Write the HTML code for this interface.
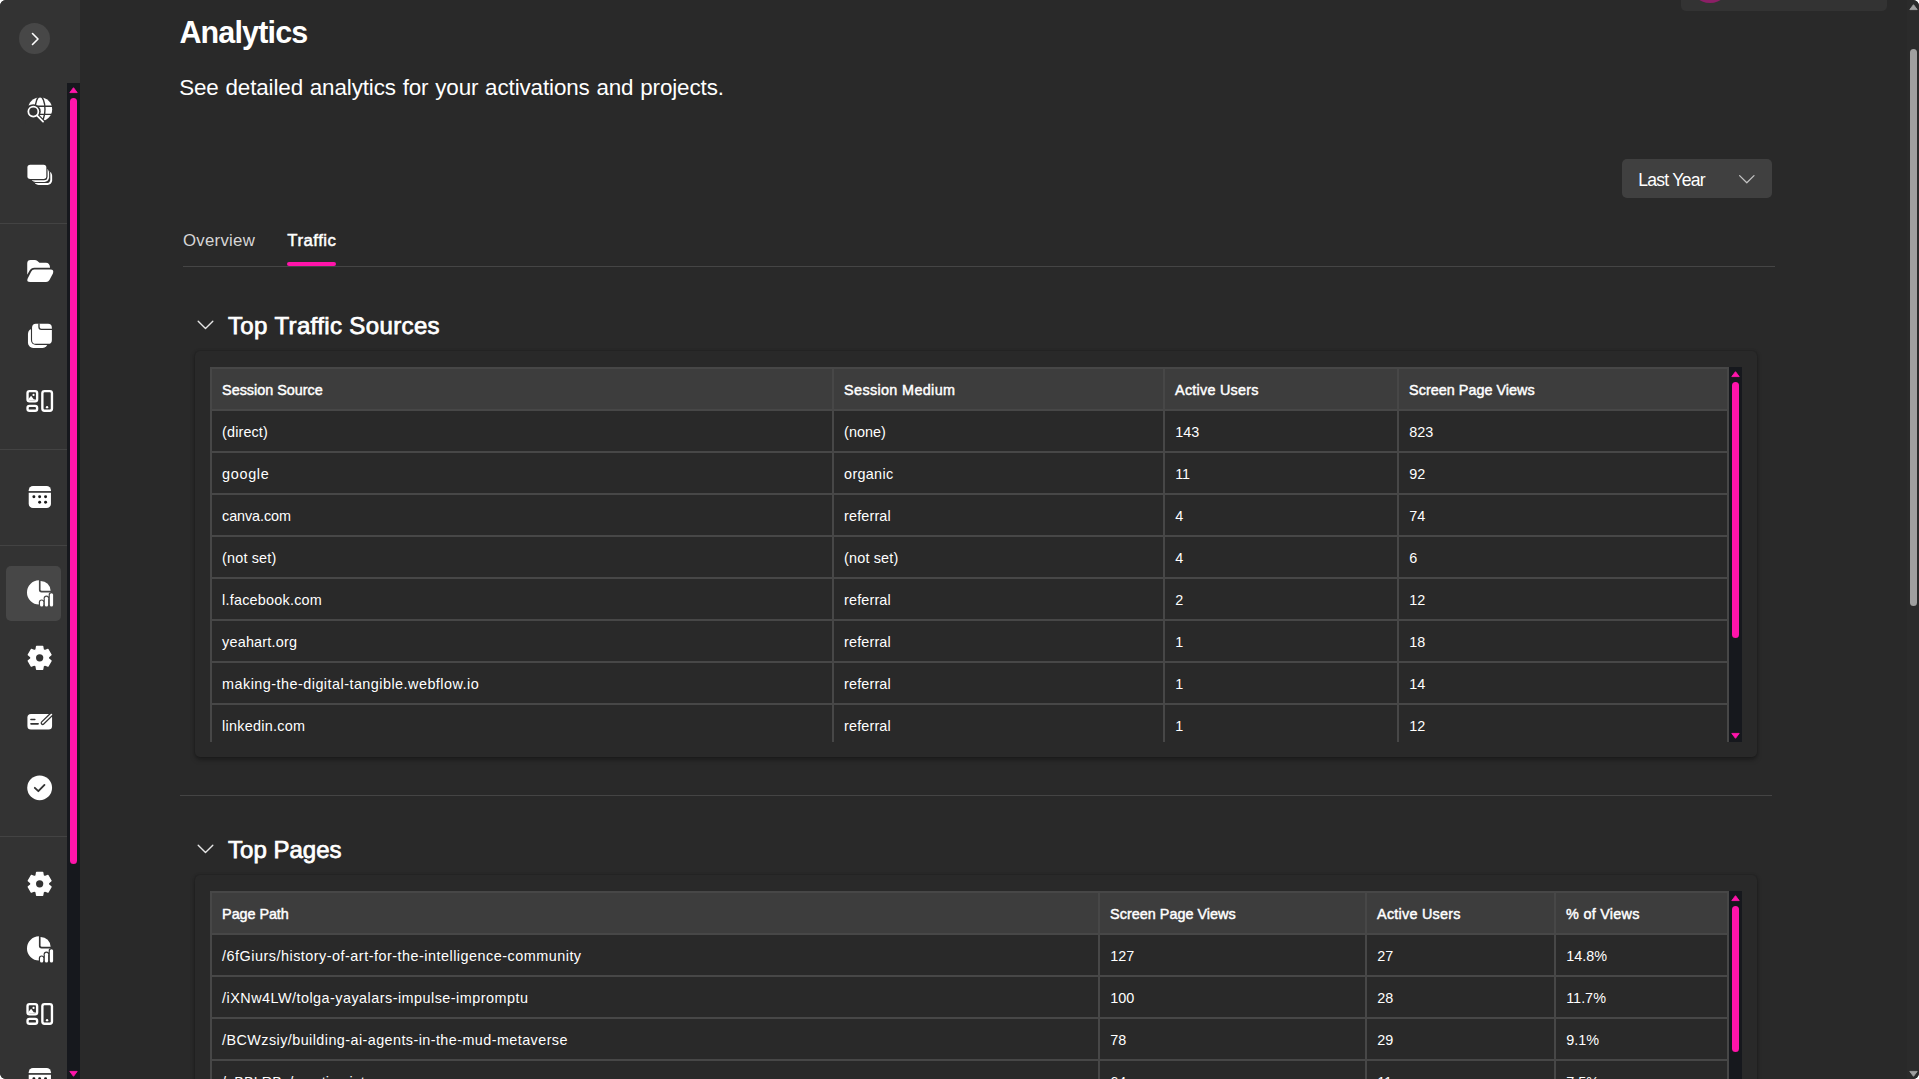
<!DOCTYPE html>
<html lang="en">
<head>
<meta charset="utf-8">
<title>Analytics</title>
<style>
*{box-sizing:border-box;margin:0;padding:0}
button{border:0;background:none;color:inherit;font:inherit;cursor:pointer;text-align:left}
a{color:inherit;text-decoration:none}
html,body{width:1919px;height:1079px;overflow:hidden;background:#fff}
body{font-family:"Liberation Sans",sans-serif;color:#fff}
#app{position:absolute;left:0;top:0;width:1919px;height:1079px;background:#292929;border-radius:6px;overflow:hidden}
#side{position:absolute;left:0;top:0;width:80px;height:1079px;background:#333}
#toggle{position:absolute;left:19px;top:23px;width:31px;height:31px;border-radius:50%;background:#474747}
#toggle svg{position:absolute;left:9.5px;top:8.5px}
.sdiv{position:absolute;left:0;width:67px;height:1px;background:#434343}
.track{position:absolute;width:13px;background:#16181d}
.track i{position:absolute;left:3px;width:7px;border-radius:3.5px;background:#ff14aa}
.track svg{position:absolute;left:0;fill:#ff14aa;stroke:#ff14aa;stroke-width:.9;stroke-linejoin:round}
#strack{left:67px;top:83px;height:996px}
.ic{position:absolute;display:block;width:40px;height:40px}.ic svg{display:block}
#sel{position:absolute;left:6px;top:566px;width:55px;height:55px;border-radius:5px;background:#474747}
.t,h1,h2,p.t{position:absolute;white-space:nowrap;line-height:1;font-weight:400}
main h1,main h2,main p,main .t{position:absolute;white-space:nowrap;line-height:1}
#user{position:absolute;left:1681px;top:-30px;width:206px;height:40.8px;border-radius:5px;background:#333}
#user i{position:absolute;left:9px;top:-7px;width:40px;height:40px;border-radius:50%;background:#8c1f66}
#range{position:absolute;left:1622px;top:159px;width:150px;height:39px;border-radius:5px;background:#404040}
#range svg{position:absolute;left:116px;top:15px}
#tabline{position:absolute;left:183px;top:266px;width:1592px;height:1px;background:#454545}
#tabsel{position:absolute;left:287px;top:262px;width:49px;height:4px;border-radius:2px;background:#ff14aa}
.chev{position:absolute;left:197px}
.card{position:absolute;left:195px;width:1562px;border-radius:5px;background:#292929;box-shadow:0 0 2.5px rgba(0,0,0,.26),0 2.5px 5px rgba(0,0,0,.3)}
.scroll{position:absolute;left:15px;top:16px;width:1532px;overflow:hidden}
.scroll .track{left:1519px;top:0}
table.grid{border-collapse:separate;border-spacing:0;table-layout:fixed;width:1519px;border-left:2px solid #474747;border-top:2px solid #474747;font-size:14.4px}
.grid th,.grid td{height:42px;padding:1.6px 0 0 10.1px;line-height:38.4px;border-right:2px solid #474747;border-bottom:2px solid #474747;text-align:left;white-space:nowrap;overflow:hidden;font-weight:400}
.grid th{background:#3d3d3d;-webkit-text-stroke:.45px #fff}
.grid td.n{padding-left:10.2px}
.hr{position:absolute;left:180px;top:795px;width:1592px;height:1px;border:0;background:#444}
#ptrack{position:absolute;left:1907px;top:0;width:12px;height:1079px;background:#2b2b2b}
#ptrack i{position:absolute;left:3px;top:49px;width:7px;height:557px;border-radius:3.5px;background:#a0a0a0}
#ptrack svg{position:absolute;left:0;fill:#a0a0a0;stroke:#a0a0a0;stroke-width:.9;stroke-linejoin:round}
</style>
</head>
<body>
<div id="app">
<nav id="side">
<button id="toggle" type="button" aria-label="Expand navigation"><svg width="12" height="14" viewBox="0 0 12 14" fill="none" stroke="#fff" stroke-width="1.6" stroke-linecap="round" stroke-linejoin="round"><path d="M3.5 1.5 L9 7 L3.5 12.5"/></svg></button>
<div class="sdiv" style="top:223px"></div><div class="sdiv" style="top:449px"></div><div class="sdiv" style="top:545px"></div><div class="sdiv" style="top:836px"></div>
<div id="sel"></div>
<a class="ic" href="#" style="left:20px;top:90px" title="Explore"><svg width="40" height="40" viewBox="0 0 1079 1079" role="img" aria-label="Explore"><circle cx="542" cy="520" r="325" fill="#fff"/><g fill="none" stroke="#333" stroke-width="38"><ellipse cx="542" cy="520" rx="132" ry="345"/><path d="M180 437H900M180 657H900"/></g><path d="M150 690H470L650 870L560 920H150Z" fill="#333"/><circle cx="360" cy="582" r="200" fill="#333"/><path d="M470 700L640 870" stroke="#333" stroke-width="110" stroke-linecap="round"/><circle cx="360" cy="582" r="135" fill="none" stroke="#fff" stroke-width="48"/><path d="M462 688L622 852" stroke="#fff" stroke-width="48" stroke-linecap="round"/></svg></a>
<a class="ic" href="#" style="left:20px;top:155px" title="Collections"><svg width="40" height="40" viewBox="0 0 1079 1079" role="img" aria-label="Collections"><rect x="375" y="437" width="492" height="370" rx="125" fill="#fff"/><rect x="345" y="407" width="472" height="350" rx="105" fill="#333"/><rect x="290" y="352" width="495" height="373" rx="125" fill="#fff"/><rect x="260" y="322" width="475" height="353" rx="105" fill="#333"/><rect x="170" y="235" width="570" height="445" rx="95" fill="#333"/><rect x="200" y="265" width="510" height="382" rx="75" fill="#fff"/></svg></a>
<a class="ic" href="#" style="left:20px;top:251px" title="Projects"><svg width="40" height="40" viewBox="0 0 1079 1079" role="img" aria-label="Projects"><path fill="#fff" d="M195 640V330Q195 240 285 240H395Q440 240 470 270L525 320H700Q800 320 812 455H390Q300 455 255 535Z"/><path fill="#fff" d="M385 500H825Q925 500 888 610L795 785Q765 835 705 835H275Q165 835 208 740L300 560Q330 500 385 500Z"/></svg></a>
<a class="ic" href="#" style="left:20px;top:316px" title="Library"><svg width="40" height="40" viewBox="0 0 1079 1079" role="img" aria-label="Library"><rect x="215" y="340" width="535" height="520" rx="140" fill="#fff"/><rect x="295" y="175" width="600" height="605" rx="135" fill="#333"/><rect x="325" y="210" width="535" height="540" rx="105" fill="#fff"/><path d="M512 200V300Q512 362 575 362H870" fill="none" stroke="#333" stroke-width="36"/></svg></a>
<a class="ic" href="#" style="left:20px;top:381px" title="Layouts"><svg width="40" height="40" viewBox="0 0 1079 1079" role="img" aria-label="Layouts"><g fill="none" stroke="#fff" stroke-width="64"><rect x="203" y="272" width="259" height="276" rx="55"/><rect x="203" y="672" width="259" height="131" rx="55"/><rect x="603" y="272" width="259" height="531" rx="58"/></g><circle cx="365" cy="375" r="30" fill="#fff"/><circle cx="730" cy="705" r="32" fill="#fff"/><path fill="#fff" d="M225 520V485L300 400L370 495L440 505V520Z"/></svg></a>
<a class="ic" href="#" style="left:20px;top:477px" title="Calendar"><svg width="40" height="40" viewBox="0 0 1079 1079" role="img" aria-label="Calendar"><rect x="235" y="240" width="600" height="595" rx="115" fill="#fff"/><rect x="200" y="380" width="680" height="45" fill="#333"/><circle cx="375" cy="532" r="40" fill="#1a1a1a"/><circle cx="530" cy="532" r="40" fill="#1a1a1a"/><circle cx="690" cy="532" r="40" fill="#1a1a1a"/><circle cx="530" cy="683" r="40" fill="#1a1a1a"/><circle cx="690" cy="683" r="40" fill="#1a1a1a"/></svg></a>
<a class="ic" href="#" style="left:20px;top:573px" title="Analytics"><svg width="40" height="40" viewBox="0 0 1079 1079" role="img" aria-label="Analytics"><path fill="#fff" d="M510 198A325 325 0 1 0 838 525H580Q510 525 510 455Z"/><path fill="#fff" d="M555 213A268 268 0 0 1 826 480H590Q555 480 555 445Z"/><rect x="508" y="713" width="152" height="224" rx="76" fill="#474747"/><rect x="638" y="608" width="152" height="329" rx="76" fill="#474747"/><rect x="773" y="513" width="152" height="424" rx="76" fill="#474747"/><rect x="540" y="745" width="88" height="160" rx="44" fill="#fff"/><rect x="670" y="640" width="88" height="265" rx="44" fill="#fff"/><rect x="805" y="545" width="88" height="360" rx="44" fill="#fff"/></svg></a>
<a class="ic" href="#" style="left:20px;top:638px" title="Settings"><svg width="40" height="40" viewBox="0 0 1079 1079" role="img" aria-label="Settings"><path d="M433 318L448 228L612 228L627 318L670 342L755 310L837 453L767 510L767 560L837 617L755 760L670 728L627 752L612 842L448 842L433 752L390 728L305 760L223 617L293 560L293 510L223 453L305 310L390 342Z" fill="#fff" stroke="#fff" stroke-width="36" stroke-linejoin="round"/><circle cx="530" cy="535" r="98" fill="#333"/></svg></a>
<a class="ic" href="#" style="left:20px;top:702px" title="Signatures"><svg width="40" height="40" viewBox="0 0 1079 1079" role="img" aria-label="Signatures"><rect x="200" y="325" width="665" height="415" rx="95" fill="#fff"/><path d="M295 470H400M295 590H490" stroke="#333" stroke-width="42" stroke-linecap="round"/><path d="M612 565L880 305" stroke="#333" stroke-width="112" stroke-linecap="round"/><path d="M612 565L848 338" stroke="#fff" stroke-width="44" stroke-linecap="round"/></svg></a>
<a class="ic" href="#" style="left:20px;top:768px" title="Approvals"><svg width="40" height="40" viewBox="0 0 1079 1079" role="img" aria-label="Approvals"><circle cx="530" cy="535" r="335" fill="#fff"/><path d="M400 535L495 625L660 455" fill="none" stroke="#333" stroke-width="50" stroke-linecap="round" stroke-linejoin="round"/></svg></a>
<a class="ic" href="#" style="left:20px;top:864px" title="Admin settings"><svg width="40" height="40" viewBox="0 0 1079 1079" role="img" aria-label="Admin settings"><path d="M433 318L448 228L612 228L627 318L670 342L755 310L837 453L767 510L767 560L837 617L755 760L670 728L627 752L612 842L448 842L433 752L390 728L305 760L223 617L293 560L293 510L223 453L305 310L390 342Z" fill="#fff" stroke="#fff" stroke-width="36" stroke-linejoin="round"/><circle cx="530" cy="535" r="98" fill="#333"/></svg></a>
<a class="ic" href="#" style="left:20px;top:929px" title="Admin analytics"><svg width="40" height="40" viewBox="0 0 1079 1079" role="img" aria-label="Admin analytics"><path fill="#fff" d="M510 198A325 325 0 1 0 838 525H580Q510 525 510 455Z"/><path fill="#fff" d="M555 213A268 268 0 0 1 826 480H590Q555 480 555 445Z"/><rect x="508" y="713" width="152" height="224" rx="76" fill="#333"/><rect x="638" y="608" width="152" height="329" rx="76" fill="#333"/><rect x="773" y="513" width="152" height="424" rx="76" fill="#333"/><rect x="540" y="745" width="88" height="160" rx="44" fill="#fff"/><rect x="670" y="640" width="88" height="265" rx="44" fill="#fff"/><rect x="805" y="545" width="88" height="360" rx="44" fill="#fff"/></svg></a>
<a class="ic" href="#" style="left:20px;top:994px" title="Admin layouts"><svg width="40" height="40" viewBox="0 0 1079 1079" role="img" aria-label="Admin layouts"><g fill="none" stroke="#fff" stroke-width="64"><rect x="203" y="272" width="259" height="276" rx="55"/><rect x="203" y="672" width="259" height="131" rx="55"/><rect x="603" y="272" width="259" height="531" rx="58"/></g><circle cx="365" cy="375" r="30" fill="#fff"/><circle cx="730" cy="705" r="32" fill="#fff"/><path fill="#fff" d="M225 520V485L300 400L370 495L440 505V520Z"/></svg></a>
<a class="ic" href="#" style="left:20px;top:1059px" title="Admin calendar"><svg width="40" height="40" viewBox="0 0 1079 1079" role="img" aria-label="Admin calendar"><rect x="235" y="240" width="600" height="595" rx="115" fill="#fff"/><rect x="200" y="380" width="680" height="45" fill="#333"/><circle cx="375" cy="532" r="40" fill="#1a1a1a"/><circle cx="530" cy="532" r="40" fill="#1a1a1a"/><circle cx="690" cy="532" r="40" fill="#1a1a1a"/><circle cx="530" cy="683" r="40" fill="#1a1a1a"/><circle cx="690" cy="683" r="40" fill="#1a1a1a"/></svg></a>
<div class="track" id="strack"><svg width="13" height="8" style="top:3px" viewBox="0 0 13 8"><path d="M6.5 1.7 L10.2 6.6 H2.8 Z"/></svg><i style="top:15px;height:766px"></i><svg width="13" height="8" style="top:987px" viewBox="0 0 13 8"><path d="M6.5 6.3 L10.2 1.4 H2.8 Z"/></svg></div>
</nav>
<main>
<div id="user" aria-label="Account"><i></i></div>
<h1 style="left:179.4px;top:17.38px;font-size:30.5px;letter-spacing:-0.841px;font-weight:700">Analytics</h1>
<p style="left:179.2px;top:77.34px;font-size:22.4px;letter-spacing:-.113px;word-spacing:.67px">See detailed analytics for your activations and projects.</p>
<button id="range" type="button" aria-haspopup="listbox" aria-label="Date range"><span class="t" style="left:16.2px;top:13.30px;font-size:17.6px;letter-spacing:-0.747px;">Last Year</span><svg width="18" height="11" viewBox="0 0 18 11" fill="none" stroke="#c4c4c4" stroke-width="1.25" stroke-linecap="round" stroke-linejoin="round"><path d="M1.6 1.6 L8.8 8.8 L16 1.6"/></svg></button>
<div id="tabs" role="tablist">
<button class="t" type="button" role="tab" aria-selected="false" style="left:183.0px;top:233.08px;font-size:16.8px;letter-spacing:0.266px;color:#d6d6d6">Overview</button>
<button class="t" type="button" role="tab" aria-selected="true" style="left:287.3px;top:233.08px;font-size:16.8px;letter-spacing:0.483px;-webkit-text-stroke:.5px #fff">Traffic</button>
<div id="tabline"></div><div id="tabsel"></div>
</div>
<section aria-label="Top Traffic Sources">
<svg class="chev" style="top:320px" width="17" height="10" viewBox="0 0 17 10" fill="none" stroke="#e6e6e6" stroke-width="1.4" stroke-linecap="round" stroke-linejoin="round"><path d="M1.2 1.3 L8.5 8.6 L15.8 1.3"/></svg>
<h2 style="left:228.0px;top:314.28px;font-size:24px;letter-spacing:0.368px;-webkit-text-stroke:.75px #fff">Top Traffic Sources</h2>
<div class="card" style="top:351px;height:406px"><div class="scroll" style="height:375px">
<table class="grid" id="tbl-sources"><colgroup><col style="width:622px"><col style="width:331px"><col style="width:234px"><col style="width:330px"></colgroup>
<thead><tr><th><span style="letter-spacing:-0.015px">Session Source</span></th><th><span style="letter-spacing:0.347px">Session Medium</span></th><th><span style="letter-spacing:0.230px">Active Users</span></th><th><span style="letter-spacing:0.017px">Screen Page Views</span></th></tr></thead><tbody>
<tr><td><span style="letter-spacing:0.131px">(direct)</span></td><td><span style="letter-spacing:0.038px">(none)</span></td><td class="n">143</td><td class="n">823</td></tr>
<tr><td><span style="letter-spacing:0.676px">google</span></td><td><span style="letter-spacing:0.299px">organic</span></td><td class="n">11</td><td class="n">92</td></tr>
<tr><td><span style="letter-spacing:-0.099px">canva.com</span></td><td><span style="letter-spacing:0.144px">referral</span></td><td class="n">4</td><td class="n">74</td></tr>
<tr><td><span style="letter-spacing:0.163px">(not set)</span></td><td><span style="letter-spacing:0.163px">(not set)</span></td><td class="n">4</td><td class="n">6</td></tr>
<tr><td><span style="letter-spacing:0.223px">l.facebook.com</span></td><td><span style="letter-spacing:0.144px">referral</span></td><td class="n">2</td><td class="n">12</td></tr>
<tr><td><span style="letter-spacing:0.200px">yeahart.org</span></td><td><span style="letter-spacing:0.144px">referral</span></td><td class="n">1</td><td class="n">18</td></tr>
<tr><td><span style="letter-spacing:0.471px">making-the-digital-tangible.webflow.io</span></td><td><span style="letter-spacing:0.144px">referral</span></td><td class="n">1</td><td class="n">14</td></tr>
<tr><td><span style="letter-spacing:0.255px">linkedin.com</span></td><td><span style="letter-spacing:0.144px">referral</span></td><td class="n">1</td><td class="n">12</td></tr>
</tbody></table>
<div class="track" style="height:375px"><svg width="13" height="8" style="top:3px" viewBox="0 0 13 8"><path d="M6.5 1.7 L10.2 6.6 H2.8 Z"/></svg><i style="top:15px;height:256px"></i><svg width="13" height="8" style="top:365px" viewBox="0 0 13 8"><path d="M6.5 6.3 L10.2 1.4 H2.8 Z"/></svg></div>
</div></div>
</section>
<hr class="hr">
<section aria-label="Top Pages">
<svg class="chev" style="top:844px" width="17" height="10" viewBox="0 0 17 10" fill="none" stroke="#e6e6e6" stroke-width="1.4" stroke-linecap="round" stroke-linejoin="round"><path d="M1.2 1.3 L8.5 8.6 L15.8 1.3"/></svg>
<h2 style="left:228.0px;top:838.28px;font-size:24px;letter-spacing:0.022px;-webkit-text-stroke:.75px #fff">Top Pages</h2>
<div class="card" style="top:875px;height:406px"><div class="scroll" style="height:375px">
<table class="grid" id="tbl-pages"><colgroup><col style="width:888px"><col style="width:267px"><col style="width:189px"><col style="width:173px"></colgroup>
<thead><tr><th><span style="letter-spacing:-0.065px">Page Path</span></th><th><span style="letter-spacing:0.017px">Screen Page Views</span></th><th><span style="letter-spacing:0.230px">Active Users</span></th><th><span style="letter-spacing:0.264px">% of Views</span></th></tr></thead><tbody>
<tr><td><span style="letter-spacing:0.496px">/6fGiurs/history-of-art-for-the-intelligence-community</span></td><td class="n">127</td><td class="n">27</td><td class="n">14.8%</td></tr>
<tr><td><span style="letter-spacing:0.474px">/iXNw4LW/tolga-yayalars-impulse-impromptu</span></td><td class="n">100</td><td class="n">28</td><td class="n">11.7%</td></tr>
<tr><td><span style="letter-spacing:0.423px">/BCWzsiy/building-ai-agents-in-the-mud-metaverse</span></td><td class="n">78</td><td class="n">29</td><td class="n">9.1%</td></tr>
<tr><td><span style="letter-spacing:0.1px">/qBBLRBz/creative-intro</span></td><td class="n">64</td><td class="n">11</td><td class="n">7.5%</td></tr>
</tbody></table>
<div class="track" style="height:375px"><svg width="13" height="8" style="top:3px" viewBox="0 0 13 8"><path d="M6.5 1.7 L10.2 6.6 H2.8 Z"/></svg><i style="top:15px;height:146px"></i></div>
</div></div>
</section>
</main>
<div id="ptrack"><svg width="13" height="8" style="top:3px" viewBox="0 0 13 8"><path d="M6.5 1.7 L10.2 6.6 H2.8 Z"/></svg><i></i><svg width="13" height="8" style="top:1070px" viewBox="0 0 13 8"><path d="M6.5 6.3 L10.2 1.4 H2.8 Z"/></svg></div>
</div>
</body>
</html>
